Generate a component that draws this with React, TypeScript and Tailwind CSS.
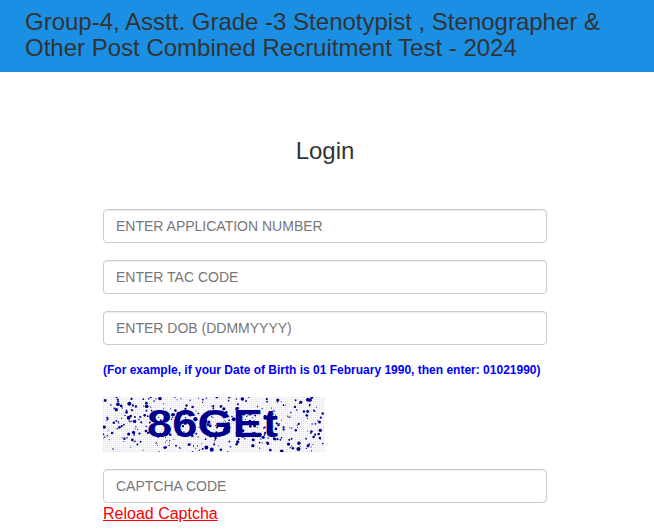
import React from 'react';

const font = "font-['Liberation_Sans',Arial,sans-serif]";

// speckle for the captcha, seeded so that it stays the same on each load
const speckle = (() => {
  let seed = 90210;
  const next = () => {
    seed = (seed * 48271) % 2147483647;
    return seed / 2147483647;
  };
  const dots = [];
  for (let i = 0; i < 400; i++) {
    dots.push({ x: next() * 222, y: next() * 55, r: 0.5 + next() * next() * 1.7 });
  }
  return dots;
})();

const Captcha = () => (
  <svg width="222" height="55" viewBox="0 0 222 55" className="block">
    <defs>
      <pattern id="grain" width="2" height="2" patternUnits="userSpaceOnUse">
        <rect width="2" height="2" fill="#fbfbfd" />
        <rect width="1" height="1" fill="#e0e0ea" />
      </pattern>
    </defs>
    <rect width="222" height="55" fill="url(#grain)" />
    {speckle.map((d, i) => (
      <circle key={i} cx={d.x} cy={d.y} r={d.r} fill="#00008b" />
    ))}
    <text
      x="44"
      y="40"
      fontFamily="'Liberation Sans', Arial, sans-serif"
      fontWeight="700"
      fontSize="38"
      textLength="131"
      lengthAdjust="spacingAndGlyphs"
      fill="#00008b"
    >
      86GEt
    </text>
  </svg>
);

const Field = ({ placeholder }: { placeholder: string }) => (
  <input
    type="text"
    placeholder={placeholder}
    className="block w-full h-[34px] px-3 py-1.5 text-sm text-[#555] bg-white border border-[#ccc] rounded shadow-[inset_0_1px_1px_rgba(0,0,0,0.075)] outline-none placeholder:text-[#777]"
  />
);

export default function App() {
  return (
    <div className={`${font} h-[531px] overflow-hidden bg-white text-[#333]`}>
      <header className="bg-[#1a8fe3] h-[72px] px-[25px] pt-[9px]">
        <h3 className="text-2xl leading-[26.4px] font-normal">
          Group-4, Asstt. Grade -3 Stenotypist , Stenographer &amp; Other Post Combined Recruitment Test - 2024
        </h3>
      </header>

      <main className="w-[444px] ml-[103px] pt-[66px]">
        <h3 className="text-2xl leading-[26.4px] font-normal text-center mb-[45px]">Login</h3>
        <form>
          <div className="flex flex-col gap-[17px]">
            <Field placeholder="ENTER APPLICATION NUMBER" />
            <Field placeholder="ENTER TAC CODE" />
            <Field placeholder="ENTER DOB (DDMMYYYY)" />
          </div>
          <p className="mt-[17px] text-xs leading-[17px] font-bold text-[#0000ff] whitespace-nowrap">
            (For example, if your Date of Birth is 01 February 1990, then enter: 01021990)
          </p>
          <div className="mt-[18px] mb-[17px]">
            <Captcha />
          </div>
          <Field placeholder="CAPTCHA CODE" />
          <a href="#" className="block w-fit pt-px text-base leading-[20px] text-[#ff0000] underline">
            Reload Captcha
          </a>
        </form>
      </main>
    </div>
  );
}
